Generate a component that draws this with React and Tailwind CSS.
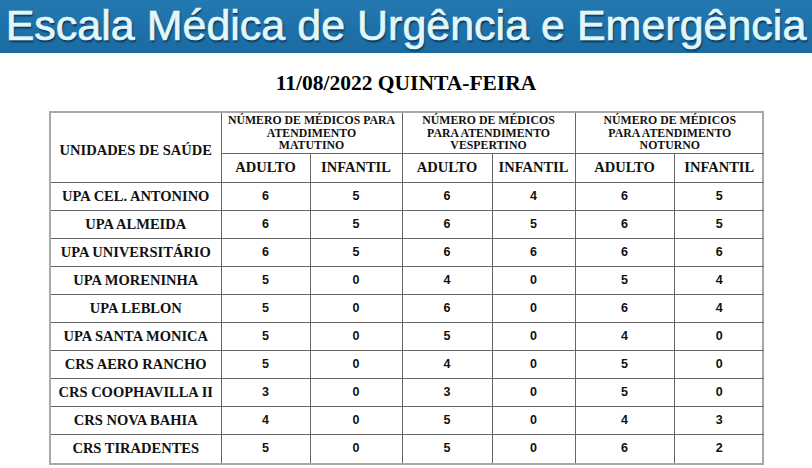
const rows = [
  ['UPA CEL. ANTONINO', 6, 5, 6, 4, 6, 5],
  ['UPA ALMEIDA', 6, 5, 6, 5, 6, 5],
  ['UPA UNIVERSITÁRIO', 6, 5, 6, 6, 6, 6],
  ['UPA MORENINHA', 5, 0, 4, 0, 5, 4],
  ['UPA LEBLON', 5, 0, 6, 0, 6, 4],
  ['UPA SANTA MONICA', 5, 0, 5, 0, 4, 0],
  ['CRS AERO RANCHO', 5, 0, 4, 0, 5, 0],
  ['CRS COOPHAVILLA II', 3, 0, 3, 0, 5, 0],
  ['CRS NOVA BAHIA', 4, 0, 5, 0, 4, 3],
  ['CRS TIRADENTES', 5, 0, 5, 0, 6, 2],
];

const serif = "font-['Liberation_Serif','Times_New_Roman',serif]";
const sans = "font-['Liberation_Sans',Arial,sans-serif]";

export default function App() {
  return (
    <div className="w-[812px] h-[468px] bg-white overflow-hidden">
      {/* banner */}
      <div className="h-[53px] bg-gradient-to-b from-[#2479b0] to-[#1a6ba2] flex items-center justify-center">
        <h1 className={`${sans} text-[43px] leading-none text-[#e0f8fc] whitespace-nowrap [-webkit-text-stroke:0.7px_#e0f8fc] [text-shadow:1px_2px_2px_rgba(0,20,50,0.7)] -mt-[2px]`}>
          Escala Médica de Urgência e Emergência
        </h1>
      </div>

      <h2 className={`${serif} font-bold text-[21.5px] leading-none text-black text-center mt-[20px]`}>
        11/08/2022 QUINTA-FEIRA
      </h2>

      <div className="mt-[16px] ml-[49px] w-[715px] border-2 border-[#a8a8a8]">
        <table className="w-full border-collapse table-fixed text-[#111]">
          <colgroup>
            <col className="w-[170px]" />
            <col className="w-[89px]" />
            <col className="w-[92px]" />
            <col className="w-[90px]" />
            <col className="w-[83px]" />
            <col className="w-[99px]" />
            <col className="w-[90px]" />
          </colgroup>
          <thead className={`${serif} font-bold`}>
            <tr className="h-[41px]">
              <th rowSpan={2} className="border-r border-b border-[#666] text-[14.5px] pt-[8px] whitespace-nowrap">UNIDADES DE SAÚDE</th>
              <th colSpan={2} className="border-r border-b border-[#666] text-[11.8px] leading-[12.4px] align-middle whitespace-nowrap">
                NÚMERO DE MÉDICOS PARA<br />ATENDIMENTO<br />MATUTINO
              </th>
              <th colSpan={2} className="border-r border-b border-[#666] text-[11.8px] leading-[12.4px] align-middle whitespace-nowrap">
                NÚMERO DE MÉDICOS<br />PARA ATENDIMENTO<br />VESPERTINO
              </th>
              <th colSpan={2} className="border-b border-[#666] text-[11.8px] leading-[12.4px] align-middle whitespace-nowrap">
                NÚMERO DE MÉDICOS<br />PARA ATENDIMENTO<br />NOTURNO
              </th>
            </tr>
            <tr className="h-[29px] text-[14.5px]">
              <th className="border-r border-b border-[#666]">ADULTO</th>
              <th className="border-r border-b border-[#666]">INFANTIL</th>
              <th className="border-r border-b border-[#666]">ADULTO</th>
              <th className="border-r border-b border-[#666]">INFANTIL</th>
              <th className="border-r border-b border-[#666]">ADULTO</th>
              <th className="border-b border-[#666]">INFANTIL</th>
            </tr>
          </thead>
          <tbody>
            {rows.map((r, i) => (
              <tr key={i} className="h-[28px]">
                <td className={`${serif} font-bold text-[14.5px] text-center whitespace-nowrap border-r border-[#666] ${i < rows.length - 1 ? 'border-b' : ''}`}>
                  {r[0]}
                </td>
                {r.slice(1).map((v, j) => (
                  <td
                    key={j}
                    className={`${sans} font-bold text-[12.5px] text-center border-[#666] ${j < 5 ? 'border-r' : ''} ${i < rows.length - 1 ? 'border-b' : ''}`}
                  >
                    {v}
                  </td>
                ))}
              </tr>
            ))}
          </tbody>
        </table>
      </div>
    </div>
  );
}
